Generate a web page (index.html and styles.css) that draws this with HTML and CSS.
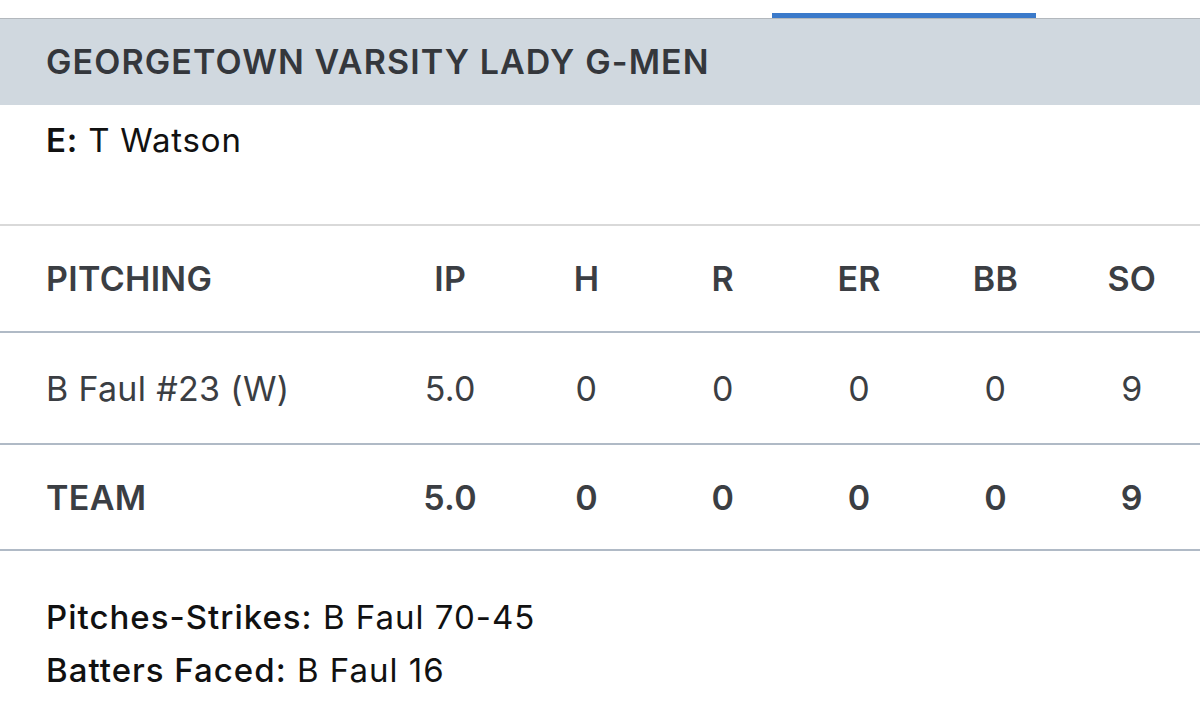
FILE: index.html
```html
<!DOCTYPE html>
<html lang="en">
<head>
<meta charset="utf-8">
<title>Box Score</title>
<link rel="stylesheet" href="styles.css">
</head>
<body>
<div class="tabbar"><div class="tab-indicator"></div></div>
<div class="team-header">GEORGETOWN VARSITY LADY G-MEN</div>
<div class="notes"><p><b>E:</b> T Watson</p></div>
<div class="stats">
  <div class="row head">
    <div class="name">PITCHING</div><div>IP</div><div>H</div><div>R</div><div>ER</div><div>BB</div><div>SO</div>
  </div>
  <div class="row player">
    <div class="name">B Faul #23 (W)</div><div>5.0</div><div>0</div><div>0</div><div>0</div><div>0</div><div>9</div>
  </div>
  <div class="row total">
    <div class="name">TEAM</div><div>5.0</div><div>0</div><div>0</div><div>0</div><div>0</div><div>9</div>
  </div>
</div>
<div class="extras">
  <p><b>Pitches-Strikes:</b> B Faul 70-45</p>
  <p><b>Batters Faced:</b> B Faul 16</p>
</div>
</body>
</html>
```
FILE: styles.css
```css
* { box-sizing: border-box; }
body {
  margin: 0;
  background: #fff;
  font-family: Inter, "Noto Sans", "Liberation Sans", sans-serif;
  color: #111;
}
p { margin: 0; }
.tabbar {
  height: 19px;
  display: flex;
  align-items: flex-end;
  padding-left: 772px;
  border-bottom: 1px solid #b3b8bd;
}
.tab-indicator {
  width: 264px;
  height: 5px;
  background: #3b7aca;
}
.team-header {
  height: 86px;
  background: #d0d8df;
  display: flex;
  align-items: center;
  padding-left: 46px;
  padding-bottom: 2px;
  font-size: 34px;
  font-weight: 600;
  letter-spacing: 1.1px;
  color: #34373c;
}
.notes {
  height: 121px;
  padding: 16px 46px 0;
  font-size: 33px;
  line-height: 38px;
  letter-spacing: 0.8px;
  border-bottom: 2px solid #d9d9d9;
}
.notes b { font-weight: 600; }
.stats { color: #3b3e43; font-size: 34px; letter-spacing: 0.3px; }
.row {
  display: grid;
  grid-template-columns: 382px repeat(6, 1fr);
  align-items: center;
  text-align: center;
  border-bottom: 2px solid #b0bac6;
}
.row .name { text-align: left; padding-left: 46px; }
.head { height: 107px; font-weight: 600; }
.player { height: 112px; font-weight: 400; }
.total { height: 106px; font-weight: 600; }
.extras {
  padding-top: 40px;
  padding-left: 46px;
  font-size: 33px;
  line-height: 53px;
  letter-spacing: 1px;
}
.extras b { font-weight: 500; }
```
